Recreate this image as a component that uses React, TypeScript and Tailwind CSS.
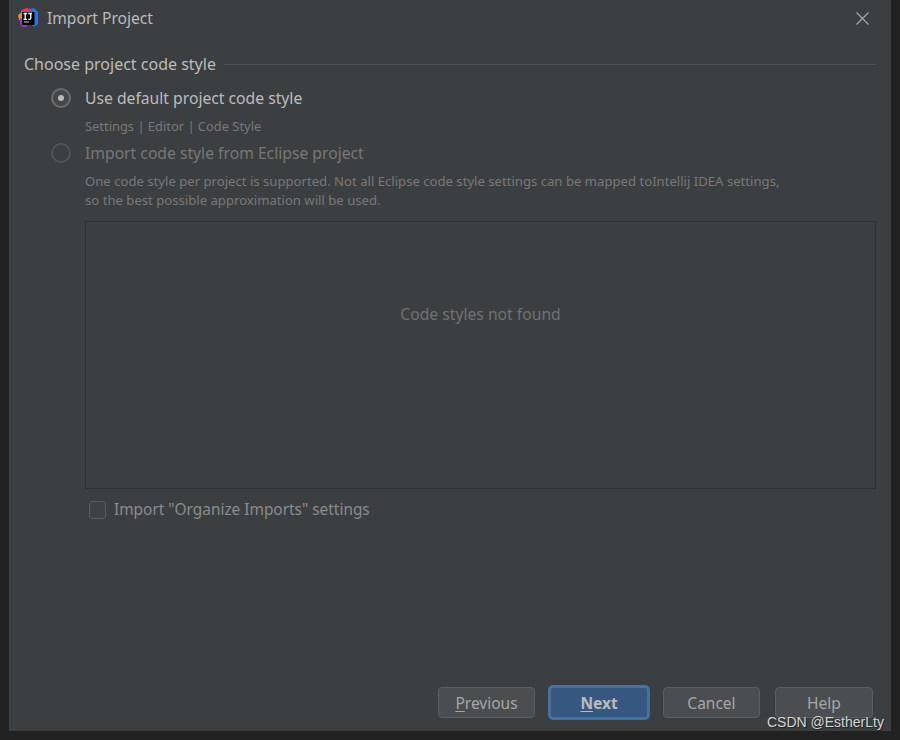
export default function App() {
  return (
    <div className="h-[740px] w-[900px] overflow-hidden bg-[#222222] px-[9px] pb-[9px] font-['Noto_Sans',sans-serif]">
      <div className="relative flex h-[731px] flex-col bg-[#3c3f41]">
        <div className="flex h-[36px] shrink-0 items-center pl-[9px] pr-[22px]">
          <svg width="20" height="20" viewBox="0 0 20 20" className="shrink-0">
            <path d="M3 2 L9 0 L14 2 L12 10 L3 10 Z" fill="#f0325c" />
            <path d="M0 7 L4 4 L5 13 L1 12 Z" fill="#f58a1f" />
            <path d="M11 1 L16 0 L20 4 L20 16 L16 19 L11 14 Z" fill="#2f6fe8" />
            <path d="M2 10 L9 12 L9 19 L4 19 L2 16 Z" fill="#a02fc0" />
            <rect x="4" y="4" width="12.5" height="13" fill="#000000" />
            <rect x="6" y="13.5" width="5" height="1" fill="#d8d8d8" />
            <path d="M5.5 5.5h3.4M7.2 5.5v5.8M5.5 11.3h3.4M10.3 5.5h3.6M12.8 5.5v4.6q0 1.2-1.2 1.2h-1.3" stroke="#ffffff" strokeWidth="1.3" fill="none" />
          </svg>
          <span className="ml-[9px] mt-[2px] text-[15.6px] leading-none text-[#bbbbbb]">Import Project</span>
          <svg width="13" height="13" viewBox="0 0 13 13" className="ml-auto">
            <path d="M0.5 0.5 L12.5 12.5 M12.5 0.5 L0.5 12.5" stroke="#a6a6a6" strokeWidth="1.2" />
          </svg>
        </div>

        <div className="mt-[17px] flex items-center px-[15px]">
          <span className="text-[16px] leading-[22px] text-[#bbbbbb]">Choose project code style</span>
          <div className="ml-[8px] h-px flex-1 bg-[#515151]" />
        </div>

        <div className="mt-[12px] flex h-[22px] items-center pl-[42px]">
          <span className="flex h-[20px] w-[20px] items-center justify-center rounded-full border-2 border-[#6a6c6d] bg-[#45484a]">
            <span className="h-[6px] w-[6px] rounded-full bg-[#bbbbbb]" />
          </span>
          <span className="ml-[14px] text-[15.7px] leading-[22px] text-[#bbbbbb]">Use default project code style</span>
        </div>

        <div className="mt-[8px] pl-[76px] text-[12.9px] leading-[18px] text-[#787878]">Settings | Editor | Code Style</div>

        <div className="mt-[7px] flex h-[22px] items-center pl-[42px]">
          <span className="h-[20px] w-[20px] rounded-full border-2 border-[#515354]" />
          <span className="ml-[14px] text-[15.7px] leading-[22px] text-[#777777]">Import code style from Eclipse project</span>
        </div>

        <div className="mt-[8px] pl-[76px] text-[13.13px] leading-[19px] text-[#787878]">
          <div>One code style per project is supported. Not all Eclipse code style settings can be mapped toIntellij IDEA settings,</div>
          <div>so the best possible approximation will be used.</div>
        </div>

        <div className="ml-[76px] mr-[15px] mt-[11px] flex h-[268px] items-center justify-center border border-[#2f3133] pb-[80px]">
          <span className="text-[15.7px] text-[#6f7173]">Code styles not found</span>
        </div>

        <div className="mt-[10px] flex h-[22px] items-center pl-[80px]">
          <span className="h-[18px] w-[17px] rounded-[3px] border border-[#5a5c5e] bg-[#3f4244]" />
          <span className="ml-[8px] text-[15.4px] leading-[22px] text-[#8a8c8d]">Import "Organize Imports" settings</span>
        </div>

        <div className="mb-[11px] mt-auto flex items-center justify-end pr-[18px]">
          <button className="h-[31px] w-[97px] rounded-[4px] border border-[#5b5d5f] bg-[#4b4e50] pt-[2px] text-[15.5px] text-[#a5a6a7]">
            <span className="underline underline-offset-2">P</span>revious
          </button>
          <button className="ml-[13px] h-[35px] w-[102px] rounded-[5px] border-[3px] border-[#46719f] bg-[#365880] pt-[2px] text-[15.5px] font-bold text-[#bbbbbb]">
            <span className="underline underline-offset-2">N</span>ext
          </button>
          <button className="ml-[13px] h-[31px] w-[97px] rounded-[4px] border border-[#5b5d5f] bg-[#4b4e50] pt-[2px] text-[15.5px] text-[#a5a6a7]">Cancel</button>
          <button className="ml-[15px] h-[31px] w-[98px] rounded-[4px] border border-[#5b5d5f] bg-[#4b4e50] pt-[2px] text-[15.5px] text-[#a5a6a7]">Help</button>
        </div>

        <span className="absolute left-[758px] top-[713px] whitespace-nowrap font-['Liberation_Sans',sans-serif] text-[14px] leading-[18px] text-[#d4d4d4] [text-shadow:1px_1px_1px_#222222]">CSDN @EstherLty</span>
      </div>
    </div>
  );
}
